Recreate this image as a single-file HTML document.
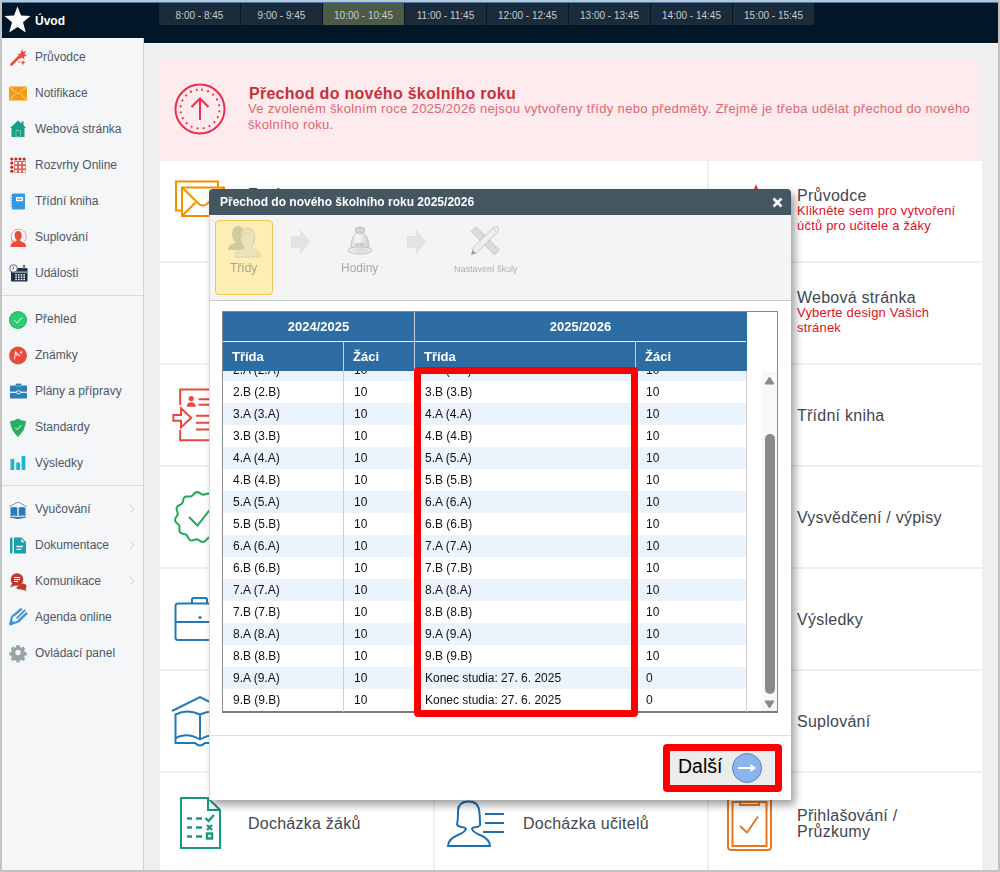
<!DOCTYPE html><html><head><meta charset="utf-8"><style>
*{box-sizing:border-box;margin:0;padding:0}
html,body{width:1000px;height:872px;overflow:hidden;background:#efefef;font-family:"Liberation Sans",sans-serif;position:relative}
.A{position:absolute}
.T{position:absolute;white-space:nowrap;line-height:1}
svg{position:absolute;overflow:visible}

</style></head><body>
<div class="A" style="left:0;top:0;width:1000px;height:44px;background:#011627"></div>
<div class="A" style="left:0;top:2px;width:1000px;height:1px;background:#3d7dbb"></div>
<div class="A" style="left:144px;top:43px;width:856px;height:1px;background:#f8f8f8"></div>
<div class="A" style="left:159px;top:3px;width:81px;height:22px;background:#1c2b3a"></div>
<div class="T" style="left:159px;top:11px;width:81px;text-align:center;font-size:10px;color:#c6cdd4">8:00 - 8:45</div>
<div class="A" style="left:241px;top:3px;width:81px;height:22px;background:#1c2b3a"></div>
<div class="T" style="left:241px;top:11px;width:81px;text-align:center;font-size:10px;color:#c6cdd4">9:00 - 9:45</div>
<div class="A" style="left:323px;top:3px;width:81px;height:22px;background:#4c5a46"></div>
<div class="T" style="left:323px;top:11px;width:81px;text-align:center;font-size:10px;color:#c6cdd4">10:00 - 10:45</div>
<div class="A" style="left:405px;top:3px;width:81px;height:22px;background:#1c2b3a"></div>
<div class="T" style="left:405px;top:11px;width:81px;text-align:center;font-size:10px;color:#c6cdd4">11:00 - 11:45</div>
<div class="A" style="left:487px;top:3px;width:81px;height:22px;background:#1c2b3a"></div>
<div class="T" style="left:487px;top:11px;width:81px;text-align:center;font-size:10px;color:#c6cdd4">12:00 - 12:45</div>
<div class="A" style="left:569px;top:3px;width:81px;height:22px;background:#1c2b3a"></div>
<div class="T" style="left:569px;top:11px;width:81px;text-align:center;font-size:10px;color:#c6cdd4">13:00 - 13:45</div>
<div class="A" style="left:651px;top:3px;width:81px;height:22px;background:#1c2b3a"></div>
<div class="T" style="left:651px;top:11px;width:81px;text-align:center;font-size:10px;color:#c6cdd4">14:00 - 14:45</div>
<div class="A" style="left:733px;top:3px;width:81px;height:22px;background:#1c2b3a"></div>
<div class="T" style="left:733px;top:11px;width:81px;text-align:center;font-size:10px;color:#c6cdd4">15:00 - 15:45</div>
<svg style="left:4px;top:6px" width="28" height="28" viewBox="0 0 28 28"><polygon points="13.5,0.5 17,9.5 26.5,10 19,16.2 21.8,26.5 13.5,21 5.2,26.5 8,16.2 0.5,10 10,9.5" fill="#fff"/></svg>
<div class="T" style="left:35px;top:15px;font-size:12px;font-weight:bold;color:#fff">Úvod</div>
<div class="A" style="left:2px;top:38px;width:142px;height:840px;background:#f5f6f8;border-right:1px solid #d4d4d4"></div>
<svg style="left:9px;top:48px" width="20" height="20" viewBox="0 0 20 20"><path d="M2.5,16.5 L11,8" stroke="#e74c3c" stroke-width="2.6" stroke-linecap="round"/><polygon points="13,1 14,4 17,3 15.5,6 18,8 15,8.5 15.5,11.5 13,9.5 10.5,11 11,8 8.5,6.5 11.5,5.5" fill="#e74c3c"/><polygon points="14,12 14.8,14 17,14.6 14.8,15.2 14,17.5 13.2,15.2 11,14.6 13.2,14" fill="#e74c3c"/><circle cx="10" cy="14" r="0.8" fill="#e74c3c"/></svg>
<div class="T" style="left:35px;top:51px;font-size:12px;color:#4d5666">Průvodce</div>
<svg style="left:9px;top:84px" width="20" height="20" viewBox="0 0 20 20"><rect x="0" y="2.5" width="18" height="14" fill="#f39c12"/><path d="M0.5,3 L9,10 L17.5,3 M0.5,16 L6.5,9.5 M17.5,16 L11.5,9.5" stroke="#fbe2b8" stroke-width="0.8" fill="none"/></svg>
<div class="T" style="left:35px;top:87px;font-size:12px;color:#4d5666">Notifikace</div>
<svg style="left:9px;top:120px" width="20" height="20" viewBox="0 0 20 20"><polygon points="1,8 9,0.5 12.5,3.5 12.5,1.5 14.5,1.5 14.5,5.3 17,8 15.5,8 15.5,17 2.5,17 2.5,8" fill="#16a085"/><rect x="7" y="10.5" width="4.5" height="6.5" fill="#16a085" stroke="#8fd3c4" stroke-width="0.7"/></svg>
<div class="T" style="left:35px;top:123px;font-size:12px;color:#4d5666">Webová stránka</div>
<svg style="left:9px;top:156px" width="20" height="20" viewBox="0 0 20 20"><g fill="#c0261a"><circle cx="2.8" cy="3" r="1.55"/><circle cx="6.9" cy="3" r="1.55"/><circle cx="11.0" cy="3" r="1.55"/><circle cx="15.1" cy="3" r="1.55"/><circle cx="2.8" cy="7.1" r="1.55"/><circle cx="2.8" cy="11.2" r="1.55"/><circle cx="2.8" cy="15.3" r="1.55"/></g><rect x="5.1" y="5.1" width="11.8" height="11.8" rx="1" fill="#d46a60"/><g fill="#fff"><rect x="5.9" y="6.0" width="2.2" height="2.2"/><rect x="10.0" y="6.0" width="2.2" height="2.2"/><rect x="14.1" y="6.0" width="2.2" height="2.2"/><rect x="5.9" y="10.1" width="2.2" height="2.2"/><rect x="10.0" y="10.1" width="2.2" height="2.2"/><rect x="14.1" y="10.1" width="2.2" height="2.2"/><rect x="5.9" y="14.2" width="2.2" height="2.2"/><rect x="10.0" y="14.2" width="2.2" height="2.2"/><rect x="14.1" y="14.2" width="2.2" height="2.2"/></g></svg>
<div class="T" style="left:35px;top:159px;font-size:12px;color:#4d5666">Rozvrhy Online</div>
<svg style="left:9px;top:192px" width="20" height="20" viewBox="0 0 20 20"><rect x="3" y="1.5" width="13" height="16" rx="1" fill="#3498db"/><rect x="7" y="5" width="7" height="4.2" fill="#fff"/><rect x="8.2" y="6.2" width="4.6" height="1.8" fill="#7fbbe8"/><path d="M1.5,4 h2.5 M1.5,6.5 h2.5 M1.5,9 h2.5 M1.5,11.5 h2.5 M1.5,14 h2.5" stroke="#3498db" stroke-width="0.9"/></svg>
<div class="T" style="left:35px;top:195px;font-size:12px;color:#4d5666">Třídní kniha</div>
<svg style="left:9px;top:228px" width="20" height="20" viewBox="0 0 20 20"><path d="M4,13.5 A7.5,7.5 0 1 1 15,14" stroke="#e74c3c" stroke-width="0.9" fill="none" stroke-dasharray="1.4,0.8"/><path d="M2.5,12.8 L4.3,14.5 L5.5,12.3" stroke="#e74c3c" stroke-width="0.9" fill="none"/><ellipse cx="9.2" cy="7.5" rx="3.5" ry="4.5" fill="#e74c3c"/><path d="M7.5,11 h3.6 v1.8 L16,15.5 Q17,16.5 17,19 H1.5 Q1.5,16.5 2.5,15.5 L7.5,12.8 Z" fill="#e74c3c"/></svg>
<div class="T" style="left:35px;top:231px;font-size:12px;color:#4d5666">Suplování</div>
<svg style="left:9px;top:264px" width="20" height="20" viewBox="0 0 20 20"><rect x="2" y="4" width="16.5" height="13.5" rx="0.8" fill="#1e3048"/><rect x="5" y="7.3" width="13" height="1.8" fill="#8a96a5"/><g fill="#fff"><rect x="6.3" y="10.2" width="1.6" height="1.4"/><rect x="9.0" y="10.2" width="1.6" height="1.4"/><rect x="11.7" y="10.2" width="1.6" height="1.4"/><rect x="14.4" y="10.2" width="1.6" height="1.4"/><rect x="6.3" y="12.5" width="1.6" height="1.4"/><rect x="9.0" y="12.5" width="1.6" height="1.4"/><rect x="11.7" y="12.5" width="1.6" height="1.4"/><rect x="14.4" y="12.5" width="1.6" height="1.4"/><rect x="6.3" y="14.8" width="1.6" height="1.4"/><rect x="9.0" y="14.8" width="1.6" height="1.4"/><rect x="11.7" y="14.8" width="1.6" height="1.4"/><rect x="14.4" y="14.8" width="1.6" height="1.4"/></g><circle cx="4.5" cy="4.5" r="3.8" fill="#f5f6f8" stroke="#5f6b7a" stroke-width="1"/><path d="M4.5,2.5 V4.8 H3" stroke="#5f6b7a" stroke-width="0.9" fill="none"/><rect x="14.2" y="1.5" width="1.5" height="3.5" fill="#f5f6f8" stroke="#1e3048" stroke-width="0.6"/></svg>
<div class="T" style="left:35px;top:267px;font-size:12px;color:#4d5666">Události</div>
<svg style="left:9px;top:310px" width="20" height="20" viewBox="0 0 20 20"><circle cx="9" cy="10" r="9" fill="#27ae60" /><circle cx="9" cy="10" r="8" fill="#2ecc71"/><path d="M5,10 L8,13 L13,7.5" stroke="#eafaf1" stroke-width="1" fill="none"/></svg>
<div class="T" style="left:35px;top:313px;font-size:12px;color:#4d5666">Přehled</div>
<svg style="left:9px;top:346px" width="20" height="20" viewBox="0 0 20 20"><circle cx="9" cy="9.5" r="9" fill="#e74c3c"/><path d="M5.5,13.5 L6.5,6 L11,10 M7,9.5 L9,8.5 M11,7 L13,5.5 M12,5 L12.8,7.5" stroke="#fbe3e0" stroke-width="1.1" fill="none"/></svg>
<div class="T" style="left:35px;top:349px;font-size:12px;color:#4d5666">Známky</div>
<svg style="left:9px;top:382px" width="20" height="20" viewBox="0 0 20 20"><rect x="1" y="3.5" width="17" height="13" rx="0.8" fill="#2a80b9"/><rect x="6.5" y="1.5" width="6" height="2.5" rx="1" fill="#2a80b9" stroke="#b9d6ea" stroke-width="0.6"/><path d="M1,10.3 H18" stroke="#eef5fb" stroke-width="1.3"/><ellipse cx="9.5" cy="10.3" rx="2.2" ry="1.6" fill="#2a80b9" stroke="#eef5fb" stroke-width="1"/></svg>
<div class="T" style="left:35px;top:385px;font-size:12px;color:#4d5666">Plány a přípravy</div>
<svg style="left:9px;top:418px" width="20" height="20" viewBox="0 0 20 20"><path d="M9,0.5 Q12.5,3 17,3 Q16.5,12 9,19 Q1.5,12 1,3 Q5.5,3 9,0.5 Z" fill="#27ae60"/><path d="M6,9.5 L8.3,11.8 L12.2,7" stroke="#eafaf1" stroke-width="1" fill="none"/></svg>
<div class="T" style="left:35px;top:421px;font-size:12px;color:#4d5666">Standardy</div>
<svg style="left:9px;top:454px" width="20" height="20" viewBox="0 0 20 20"><rect x="1.5" y="5" width="3.8" height="11" fill="#1fb5d0"/><rect x="7.2" y="8.5" width="3.8" height="7.5" fill="#1fb5d0"/><rect x="12.6" y="2" width="3.8" height="14" fill="#1fb5d0"/></svg>
<div class="T" style="left:35px;top:457px;font-size:12px;color:#4d5666">Výsledky</div>
<svg style="left:9px;top:500px" width="20" height="20" viewBox="0 0 20 20"><path d="M0.5,6.5 L9,2 L17.5,6.5" stroke="#2a7ab8" stroke-width="1" fill="none" stroke-dasharray="1.6,0.6"/><path d="M1.5,7.5 Q5,6.5 8.3,7.5 V16 Q5,15 1.5,16 Z M9.7,7.5 Q13,6.5 16.5,7.5 V16 Q13,15 9.7,16 Z" fill="#2a7ab8"/><path d="M1.5,17.2 H16.5 L9,18.6 Z" fill="#2a7ab8" stroke="#2a7ab8" stroke-width="1"/></svg>
<div class="T" style="left:35px;top:503px;font-size:12px;color:#4d5666">Vyučování</div>
<svg style="left:129px;top:504px" width="6" height="10" viewBox="0 0 6 10"><path d="M1,1 L5,5 L1,9" stroke="#cfd2d6" stroke-width="1" fill="none"/></svg>
<svg style="left:9px;top:536px" width="20" height="20" viewBox="0 0 20 20"><rect x="1" y="1.5" width="2.5" height="16" rx="1.2" fill="#1aa1ad"/><path d="M5,1.5 H12.5 L17,6 V17.5 H5 Z" fill="#1aa1ad"/><path d="M12.3,3 V6.3 H15.5 Z" fill="#fff"/><path d="M8,10.5 H13.5 M8,13.3 H12.2" stroke="#fff" stroke-width="1.3" stroke-linecap="round"/></svg>
<div class="T" style="left:35px;top:539px;font-size:12px;color:#4d5666">Dokumentace</div>
<svg style="left:129px;top:540px" width="6" height="10" viewBox="0 0 6 10"><path d="M1,1 L5,5 L1,9" stroke="#cfd2d6" stroke-width="1" fill="none"/></svg>
<svg style="left:9px;top:572px" width="20" height="20" viewBox="0 0 20 20"><circle cx="8" cy="7.5" r="6.3" fill="#c0392b"/><path d="M3,11.5 L1.2,15.5 L7,13 Z" fill="#c0392b"/><path d="M5,5.5 H11 M5,7.5 H11 M5,9.5 H9" stroke="#fff" stroke-width="1"/><path d="M12,11.5 Q17,11 17.5,14 Q17.5,16 16.5,17 L18,19 L12.5,17.5 Q9,17.5 7,16 Z" fill="#c0392b"/></svg>
<div class="T" style="left:35px;top:575px;font-size:12px;color:#4d5666">Komunikace</div>
<svg style="left:129px;top:576px" width="6" height="10" viewBox="0 0 6 10"><path d="M1,1 L5,5 L1,9" stroke="#cfd2d6" stroke-width="1" fill="none"/></svg>
<svg style="left:9px;top:608px" width="20" height="20" viewBox="0 0 20 20"><g stroke="#3d94d8" fill="none" stroke-linecap="butt"><path d="M3.8,8.2 L12.8,0.6" stroke-width="2.4"/><path d="M7.6,10.4 L16.2,1.9" stroke-width="1.8"/><path d="M9.5,13.2 L18,4.8" stroke-width="2.6"/><path d="M1,16.6 L3.2,7.8" stroke-width="2"/><path d="M1,16.6 L10.5,13" stroke-width="2"/></g><polygon points="0.2,17.5 2,11.5 6,15.3" fill="#3d94d8"/></svg>
<div class="T" style="left:35px;top:611px;font-size:12px;color:#4d5666">Agenda online</div>
<svg style="left:9px;top:644px" width="20" height="20" viewBox="0 0 20 20"><g transform="translate(9,8.5) scale(0.88)"><path d="M-1.6,-8.5 h3.2 l0.5,2.3 l1.8,0.8 l2,-1.3 l2.3,2.3 l-1.3,2 l0.8,1.8 l2.3,0.5 v3.2 l-2.3,0.5 l-0.8,1.8 l1.3,2 l-2.3,2.3 l-2,-1.3 l-1.8,0.8 l-0.5,2.3 h-3.2 l-0.5,-2.3 l-1.8,-0.8 l-2,1.3 l-2.3,-2.3 l1.3,-2 l-0.8,-1.8 l-2.3,-0.5 v-3.2 l2.3,-0.5 l0.8,-1.8 l-1.3,-2 l2.3,-2.3 l2,1.3 l1.8,-0.8 Z" fill="#95a5a6"/><circle r="3" fill="#f5f6f8"/></g></svg>
<div class="T" style="left:35px;top:647px;font-size:12px;color:#4d5666">Ovládací panel</div>
<div class="A" style="left:2px;top:295px;width:141px;height:1px;background:#dcdcdc"></div>
<div class="A" style="left:2px;top:485px;width:141px;height:1px;background:#dcdcdc"></div>
<div class="A" style="left:160px;top:59px;width:822px;height:100px;background:#fdebed"></div>
<svg style="left:174px;top:83px" width="52" height="52" viewBox="0 0 52 52"><circle cx="26" cy="26" r="24.5" stroke="#f02c4c" stroke-width="2" fill="none"/><circle cx="26" cy="26" r="19.5" stroke="#f02c4c" stroke-width="2.1" fill="none" stroke-dasharray="0.1,6.026" stroke-linecap="round" transform="rotate(-84 26 26)"/><path d="M26,37 V15.5 M17.5,24 L26,15.5 L34.5,24" stroke="#f02c4c" stroke-width="2" fill="none"/></svg>
<div class="T" style="left:249px;top:86px;font-size:16px;font-weight:bold;color:#c7303a;letter-spacing:0.27px">Přechod do nového školního roku</div>
<div class="T" style="left:248px;top:101px;font-size:13px;line-height:15.5px;color:#dc6670;letter-spacing:0.33px">Ve zvoleném školním roce 2025/2026 nejsou vytvořeny třídy nebo předměty. Zřejmě je třeba udělat přechod do nového<br>školního roku.</div>
<div class="A" style="left:160px;top:161px;width:547px;height:100px;background:#fff"></div>
<div class="A" style="left:709px;top:161px;width:273px;height:100px;background:#fff"></div>
<div class="A" style="left:160px;top:263px;width:273px;height:100px;background:#fff"></div>
<div class="A" style="left:435px;top:263px;width:272px;height:100px;background:#fff"></div>
<div class="A" style="left:709px;top:263px;width:273px;height:100px;background:#fff"></div>
<div class="A" style="left:160px;top:365px;width:273px;height:100px;background:#fff"></div>
<div class="A" style="left:435px;top:365px;width:272px;height:100px;background:#fff"></div>
<div class="A" style="left:709px;top:365px;width:273px;height:100px;background:#fff"></div>
<div class="A" style="left:160px;top:467px;width:273px;height:100px;background:#fff"></div>
<div class="A" style="left:435px;top:467px;width:272px;height:100px;background:#fff"></div>
<div class="A" style="left:709px;top:467px;width:273px;height:100px;background:#fff"></div>
<div class="A" style="left:160px;top:569px;width:273px;height:100px;background:#fff"></div>
<div class="A" style="left:435px;top:569px;width:272px;height:100px;background:#fff"></div>
<div class="A" style="left:709px;top:569px;width:273px;height:100px;background:#fff"></div>
<div class="A" style="left:160px;top:671px;width:273px;height:100px;background:#fff"></div>
<div class="A" style="left:435px;top:671px;width:272px;height:100px;background:#fff"></div>
<div class="A" style="left:709px;top:671px;width:273px;height:100px;background:#fff"></div>
<div class="A" style="left:160px;top:773px;width:273px;height:100px;background:#fff"></div>
<div class="A" style="left:435px;top:773px;width:272px;height:100px;background:#fff"></div>
<div class="A" style="left:709px;top:773px;width:273px;height:100px;background:#fff"></div>
<div class="T" style="left:797px;top:188px;font-size:16px;color:#3f4751;letter-spacing:0.25px">Průvodce</div>
<div class="T" style="left:797px;top:203px;font-size:13px;color:#e0101e;line-height:15px;letter-spacing:0.2px">Klikněte sem pro vytvoření<br>účtů pro učitele a žáky</div>
<div class="T" style="left:797px;top:290px;font-size:16px;color:#3f4751;letter-spacing:0.25px">Webová stránka</div>
<div class="T" style="left:797px;top:305px;font-size:13px;color:#e0101e;line-height:15px;letter-spacing:0.2px">Vyberte design Vašich<br>stránek</div>
<div class="T" style="left:797px;top:408px;font-size:16px;color:#3f4751;letter-spacing:0.25px">Třídní kniha</div>
<div class="T" style="left:797px;top:510px;font-size:16px;color:#3f4751;letter-spacing:0.25px">Vysvědčení / výpisy</div>
<div class="T" style="left:797px;top:612px;font-size:16px;color:#3f4751;letter-spacing:0.25px">Výsledky</div>
<div class="T" style="left:797px;top:714px;font-size:16px;color:#3f4751;letter-spacing:0.25px">Suplování</div>
<div class="T" style="left:797px;top:808px;font-size:16px;color:#3f4751;letter-spacing:0.25px;line-height:16px">Přihlašování /<br>Průzkumy</div>
<div class="T" style="left:248px;top:816px;font-size:16px;color:#3f4751;letter-spacing:0.25px">Docházka žáků</div>
<div class="T" style="left:523px;top:816px;font-size:16px;color:#3f4751;letter-spacing:0.25px">Docházka učitelů</div>
<div class="T" style="left:248px;top:187px;font-size:16px;color:#3f4751;letter-spacing:0.25px">Zprávy</div>
<svg style="left:752px;top:184px" width="10" height="10" viewBox="0 0 10 10"><polygon points="4,0 6,5 2,5" fill="#e03b30"/></svg>
<svg style="left:170px;top:175px" width="60" height="50" viewBox="0 0 60 50" fill="none" stroke="#f39200" stroke-width="2"><path d="M11,35.5 H6 V6.5 H48 V12"/><rect x="12" y="12.5" width="42" height="28.5"/><path d="M12,12.5 L29,29 Q33,32 37,29 L54,12.5 M12,41 L25.5,27.5"/></svg>
<svg style="left:168px;top:385px" width="50" height="60" viewBox="0 0 50 60" fill="none" stroke="#e8483e" stroke-width="2"><path d="M12.2,20 V4.5 H45 M12.2,45 V55.3 H45"/><path d="M5.4,29.9 H13 V23.2 L23.2,32.8 L13,42.5 V35.8 H5.4 Z"/><path d="M28,30.8 H45 M28,37.7 H45 M28,44.6 H45 M30.5,14.3 H45 M30.5,19.8 H45"/><circle cx="23.2" cy="13.6" r="2.6" fill="#e8483e" stroke="none"/><path d="M18.6,21.8 Q19,17.2 23.2,17.2 Q27.4,17.2 27.8,21.8 Z" fill="#e8483e" stroke="none"/></svg>
<svg style="left:175px;top:492px" width="50" height="50" viewBox="0 0 50 50" fill="none" stroke="#1eaa58" stroke-width="2"><polyline points="48.80,25.00 47.80,26.49 47.26,27.93 47.41,29.46 47.99,31.16 48.44,32.96 48.24,34.62 47.20,35.95 45.61,36.90 44.00,37.69 42.81,38.67 42.18,40.06 41.83,41.83 41.32,43.61 40.31,44.95 38.75,45.58 36.90,45.61 35.10,45.49 33.59,45.74 32.34,46.63 31.16,47.99 29.83,49.28 28.28,49.93 26.62,49.70 25.00,48.80 23.51,47.80 22.07,47.26 20.54,47.41 18.84,47.99 17.04,48.44 15.38,48.24 14.05,47.20 13.10,45.61 12.31,44.00 11.33,42.81 9.94,42.18 8.17,41.83 6.39,41.32 5.05,40.31 4.42,38.75 4.39,36.90 4.51,35.10 4.26,33.59 3.37,32.34 2.01,31.16 0.72,29.83 0.07,28.28 0.30,26.62 1.20,25.00 2.20,23.51 2.74,22.07 2.59,20.54 2.01,18.84 1.56,17.04 1.76,15.38 2.80,14.05 4.39,13.10 6.00,12.31 7.19,11.33 7.82,9.94 8.17,8.17 8.68,6.39 9.69,5.05 11.25,4.42 13.10,4.39 14.90,4.51 16.41,4.26 17.66,3.37 18.84,2.01 20.17,0.72 21.72,0.07 23.38,0.30 25.00,1.20 26.49,2.20 27.93,2.74 29.46,2.59 31.16,2.01 32.96,1.56 34.62,1.76 35.95,2.80 36.90,4.39 37.69,6.00 38.67,7.19 40.06,7.82 41.83,8.17 43.61,8.68 44.95,9.69 45.58,11.25 45.61,13.10 45.49,14.90 45.74,16.41 46.63,17.66 47.99,18.84 49.28,20.17 49.93,21.72 49.70,23.38 48.80,25.00"/><path d="M14,25 L22.5,33.5 L37,15"/></svg>
<svg style="left:174px;top:596px" width="52" height="46" viewBox="0 0 52 46" fill="none" stroke="#2379b7" stroke-width="2"><path d="M18,7.5 V3.5 Q18,2 19.5,2 H31.5 Q33,2 33,3.5 V7.5"/><rect x="1.5" y="7.5" width="49" height="36.5" rx="2.5"/><path d="M1.5,26 H50.5"/><circle cx="26" cy="21.5" r="1.6" fill="#2379b7" stroke="none"/></svg>
<svg style="left:170px;top:695px" width="60" height="56" viewBox="0 0 60 56" fill="none" stroke="#2379b7" stroke-width="2"><path d="M2,16 L30,2 L58,16"/><path d="M5.5,19.5 Q17,13.5 30,19.5 Q43,13.5 54.5,19.5 V48 H35 Q30,53 25,48 H5.5 Z M30,19.5 V45"/><path d="M5.5,43 Q17,37 30,44.5 Q43,37 54.5,43"/></svg>
<svg style="left:178px;top:796px" width="44" height="54" viewBox="0 0 44 54" fill="none" stroke="#16997e" stroke-width="2"><path d="M3,2 H30 L42,14 V52 H3 Z M30,2 V14 H42"/><path d="M9,22.5 H14 M18,22.5 H24 M9,31.5 H14 M18,31.5 H24 M9,40.5 H14 M18,40.5 H24" stroke-width="2.4"/><path d="M27.5,22 L30.5,25 L36,19 M29,29 L34,34 M34,29 L29,34" stroke-width="2.4"/><rect x="29" y="37.5" width="5" height="5" stroke-width="2.4"/></svg>
<svg style="left:446px;top:799px" width="60" height="50" viewBox="0 0 60 50" fill="none" stroke="#1f6fb0" stroke-width="2"><path d="M2,47 Q2,40 12,36 Q19,33 20,30 Q19,28 15,28 Q11,27 11,25 Q12,22 12,12 Q12,3 22,2.5 Q31,2 33,10 Q34,17 34,24 Q35,27 31,28 Q26,28 26,30 Q27,33 34,36 Q44,40 44,47 Z"/><path d="M39,15 H58 M39,24 H58 M37,33 H58"/></svg>
<svg style="left:725px;top:795px" width="50" height="58" viewBox="0 0 50 58" fill="none" stroke="#e8771e" stroke-width="2"><path d="M3,2 V51.5 Q3,55 6.5,55 H42.5 Q46,55 46,51.5 V2"/><rect x="7.5" y="7" width="34" height="44"/><path d="M15,6 V10 H34 V6"/><path d="M15,31 L22,37.5 L33,21.5"/></svg>
<div class="A" style="left:209px;top:189px;width:582px;height:611px;background:#fff;border-radius:4px 4px 0 0;box-shadow:4px 5px 9px rgba(0,0,0,0.38)"></div>
<div class="A" style="left:209px;top:189px;width:582px;height:26px;background:#44565f;border-radius:4px 4px 0 0"></div>
<div class="T" style="left:220px;top:196px;font-size:12px;font-weight:bold;color:#fff;will-change:transform">Přechod do nového školního roku 2025/2026</div>
<svg style="left:772px;top:197px" width="11" height="11" viewBox="0 0 11 11"><path d="M1.5,1.5 L9.5,9.5 M9.5,1.5 L1.5,9.5" stroke="#fff" stroke-width="2.6"/></svg>
<div class="A" style="left:209px;top:215px;width:582px;height:85px;background:#f4f4f4;border-left:1px solid #d6d6d6"></div>
<div class="A" style="left:209px;top:300px;width:582px;height:1px;background:#cacaca"></div>
<div class="A" style="left:209px;top:301px;width:1px;height:499px;background:#dadada"></div>
<div class="A" style="left:215px;top:220px;width:58px;height:75px;background:#fdeeb4;border:1px solid #f0c550;border-radius:4px"></div>
<svg style="left:226px;top:223px" width="36" height="36" viewBox="0 0 36 36"><path d="M2,27 Q2.5,21.5 8,20.5 L9.5,19 Q6,16.5 6,11 Q6.5,3 12,3 Q17.5,3 18,10 Q18.5,17 15.5,19.5 L18,21.5 L18,27 Z" fill="#d3c9a0"/><path d="M9,34 Q9.5,27.5 16.5,26 L19,24.5 Q15,21 14.5,15 Q14.5,5 21.5,5 Q28.5,5 29,14 Q29,21 25,24.5 L27.5,26 Q34,27.5 34.5,34 Z" fill="#ece3b9" stroke="#d6cc9f" stroke-width="0.8"/><path d="M15.5,14 Q17,9 21.5,10 Q26,11 27.5,14" stroke="#d6cc9f" stroke-width="0.8" fill="none"/></svg>
<div class="T" style="left:230px;top:262px;font-size:12px;color:#aaa58a;will-change:transform">Třídy</div>
<svg style="left:291px;top:228px" width="20" height="28" viewBox="0 0 20 28"><polygon points="0,8 9,8 9,1 19,14 9,27 9,20 0,20" fill="#e3e3e3"/></svg>
<svg style="left:407px;top:228px" width="20" height="28" viewBox="0 0 20 28"><polygon points="0,8 9,8 9,1 19,14 9,27 9,20 0,20" fill="#e3e3e3"/></svg>
<svg style="left:346px;top:226px" width="28" height="30" viewBox="0 0 28 30"><defs><linearGradient id="bg1" x1="0" y1="0" x2="1" y2="0"><stop offset="0" stop-color="#d8d8d8"/><stop offset="0.35" stop-color="#f7f7f7"/><stop offset="1" stop-color="#cfcfcf"/></linearGradient></defs><path d="M5,22 Q4.5,8 14,5.5 Q23.5,8 23,22 Z" fill="url(#bg1)" stroke="#c2c2c2" stroke-width="0.8"/><ellipse cx="14" cy="24.5" rx="12" ry="3.6" fill="#ececec" stroke="#bcbcbc" stroke-width="0.9"/><ellipse cx="15" cy="24.5" rx="8" ry="2.4" fill="#dedede"/><ellipse cx="14" cy="4.3" rx="4.8" ry="3.3" fill="#d2d2d2" stroke="#bdbdbd" stroke-width="0.7"/><text x="14" y="19.8" font-size="7" font-style="italic" text-anchor="middle" fill="#8f8f8f" font-family="Liberation Serif">asc</text></svg>
<div class="T" style="left:341px;top:262px;font-size:12px;color:#a8a8a8;will-change:transform">Hodiny</div>
<svg style="left:469px;top:225px" width="32" height="32" viewBox="0 0 32 32"><path d="M2,6.5 L7,1.5 L30.5,25 L25.5,30 Z" fill="#dcdcdc" stroke="#c4c4c4" stroke-width="0.8"/><path d="M9,4 L7.5,5.5 M12,7 L10.5,8.5 M15,10 L13.5,11.5 M21,16 L19.5,17.5 M24,19 L22.5,20.5 M27,22 L25.5,23.5" stroke="#b8b8b8" stroke-width="0.6"/><path d="M2.5,29.5 L5,21.5 L25,2 Q27,0.5 29,2.5 Q30.5,4.5 29,6.5 L9,26.5 Z" fill="#efefef" stroke="#bcbcbc" stroke-width="0.8"/><path d="M24,3.5 L27.5,7" stroke="#bcbcbc" stroke-width="0.7"/><path d="M2.5,29.5 L3.5,25 L7,28.5 Z" fill="#9a9a9a"/></svg>
<div class="T" style="left:454px;top:265px;font-size:9px;color:#aeaeae;will-change:transform">Nastavení školy</div>
<div class="A" style="left:222px;top:311px;width:556px;height:402px;border:1px solid #8a8a8a;border-bottom:2px solid #7a7a7a;background:#fff"></div>
<div class="A" style="left:223px;top:312px;width:523px;height:59px;background:#2e6da4"></div>
<div class="A" style="left:223px;top:341px;width:523px;height:1px;background:#e8eef5"></div>
<div class="A" style="left:414px;top:312px;width:1px;height:29px;background:#c5d3e0"></div>
<div class="A" style="left:343px;top:342px;width:1px;height:29px;background:#c5d3e0"></div>
<div class="A" style="left:414px;top:342px;width:1px;height:29px;background:#c5d3e0"></div>
<div class="A" style="left:635px;top:342px;width:1px;height:29px;background:#c5d3e0"></div>
<div class="T" style="left:223px;top:320px;width:191px;text-align:center;font-size:13px;font-weight:bold;color:#fff;will-change:transform">2024/2025</div>
<div class="T" style="left:415px;top:320px;width:331px;text-align:center;font-size:13px;font-weight:bold;color:#fff;will-change:transform">2025/2026</div>
<div class="T" style="left:232px;top:350px;font-size:13px;font-weight:bold;color:#fff;will-change:transform">Třída</div>
<div class="T" style="left:353px;top:350px;font-size:13px;font-weight:bold;color:#fff;will-change:transform">Žáci</div>
<div class="T" style="left:424px;top:350px;font-size:13px;font-weight:bold;color:#fff;will-change:transform">Třída</div>
<div class="T" style="left:645px;top:350px;font-size:13px;font-weight:bold;color:#fff;will-change:transform">Žáci</div>
<div class="A" style="left:223px;top:371px;width:523px;height:340px;overflow:hidden;will-change:transform">
<div class="A" style="left:0;top:-12px;width:523px;height:22px;background:#ebf3fd"></div>
<div class="T" style="left:10px;top:-7px;font-size:12px;color:#111">2.A (2.A)</div>
<div class="T" style="left:131px;top:-7px;font-size:12px;color:#111">10</div>
<div class="T" style="left:202px;top:-7px;font-size:12px;color:#111">3.A (3.A)</div>
<div class="T" style="left:423px;top:-7px;font-size:12px;color:#111">10</div>
<div class="A" style="left:0;top:10px;width:523px;height:22px;background:#fff"></div>
<div class="T" style="left:10px;top:15px;font-size:12px;color:#111">2.B (2.B)</div>
<div class="T" style="left:131px;top:15px;font-size:12px;color:#111">10</div>
<div class="T" style="left:202px;top:15px;font-size:12px;color:#111">3.B (3.B)</div>
<div class="T" style="left:423px;top:15px;font-size:12px;color:#111">10</div>
<div class="A" style="left:0;top:32px;width:523px;height:22px;background:#ebf3fd"></div>
<div class="T" style="left:10px;top:37px;font-size:12px;color:#111">3.A (3.A)</div>
<div class="T" style="left:131px;top:37px;font-size:12px;color:#111">10</div>
<div class="T" style="left:202px;top:37px;font-size:12px;color:#111">4.A (4.A)</div>
<div class="T" style="left:423px;top:37px;font-size:12px;color:#111">10</div>
<div class="A" style="left:0;top:54px;width:523px;height:22px;background:#fff"></div>
<div class="T" style="left:10px;top:59px;font-size:12px;color:#111">3.B (3.B)</div>
<div class="T" style="left:131px;top:59px;font-size:12px;color:#111">10</div>
<div class="T" style="left:202px;top:59px;font-size:12px;color:#111">4.B (4.B)</div>
<div class="T" style="left:423px;top:59px;font-size:12px;color:#111">10</div>
<div class="A" style="left:0;top:76px;width:523px;height:22px;background:#ebf3fd"></div>
<div class="T" style="left:10px;top:81px;font-size:12px;color:#111">4.A (4.A)</div>
<div class="T" style="left:131px;top:81px;font-size:12px;color:#111">10</div>
<div class="T" style="left:202px;top:81px;font-size:12px;color:#111">5.A (5.A)</div>
<div class="T" style="left:423px;top:81px;font-size:12px;color:#111">10</div>
<div class="A" style="left:0;top:98px;width:523px;height:22px;background:#fff"></div>
<div class="T" style="left:10px;top:103px;font-size:12px;color:#111">4.B (4.B)</div>
<div class="T" style="left:131px;top:103px;font-size:12px;color:#111">10</div>
<div class="T" style="left:202px;top:103px;font-size:12px;color:#111">5.B (5.B)</div>
<div class="T" style="left:423px;top:103px;font-size:12px;color:#111">10</div>
<div class="A" style="left:0;top:120px;width:523px;height:22px;background:#ebf3fd"></div>
<div class="T" style="left:10px;top:125px;font-size:12px;color:#111">5.A (5.A)</div>
<div class="T" style="left:131px;top:125px;font-size:12px;color:#111">10</div>
<div class="T" style="left:202px;top:125px;font-size:12px;color:#111">6.A (6.A)</div>
<div class="T" style="left:423px;top:125px;font-size:12px;color:#111">10</div>
<div class="A" style="left:0;top:142px;width:523px;height:22px;background:#fff"></div>
<div class="T" style="left:10px;top:147px;font-size:12px;color:#111">5.B (5.B)</div>
<div class="T" style="left:131px;top:147px;font-size:12px;color:#111">10</div>
<div class="T" style="left:202px;top:147px;font-size:12px;color:#111">6.B (6.B)</div>
<div class="T" style="left:423px;top:147px;font-size:12px;color:#111">10</div>
<div class="A" style="left:0;top:164px;width:523px;height:22px;background:#ebf3fd"></div>
<div class="T" style="left:10px;top:169px;font-size:12px;color:#111">6.A (6.A)</div>
<div class="T" style="left:131px;top:169px;font-size:12px;color:#111">10</div>
<div class="T" style="left:202px;top:169px;font-size:12px;color:#111">7.A (7.A)</div>
<div class="T" style="left:423px;top:169px;font-size:12px;color:#111">10</div>
<div class="A" style="left:0;top:186px;width:523px;height:22px;background:#fff"></div>
<div class="T" style="left:10px;top:191px;font-size:12px;color:#111">6.B (6.B)</div>
<div class="T" style="left:131px;top:191px;font-size:12px;color:#111">10</div>
<div class="T" style="left:202px;top:191px;font-size:12px;color:#111">7.B (7.B)</div>
<div class="T" style="left:423px;top:191px;font-size:12px;color:#111">10</div>
<div class="A" style="left:0;top:208px;width:523px;height:22px;background:#ebf3fd"></div>
<div class="T" style="left:10px;top:213px;font-size:12px;color:#111">7.A (7.A)</div>
<div class="T" style="left:131px;top:213px;font-size:12px;color:#111">10</div>
<div class="T" style="left:202px;top:213px;font-size:12px;color:#111">8.A (8.A)</div>
<div class="T" style="left:423px;top:213px;font-size:12px;color:#111">10</div>
<div class="A" style="left:0;top:230px;width:523px;height:22px;background:#fff"></div>
<div class="T" style="left:10px;top:235px;font-size:12px;color:#111">7.B (7.B)</div>
<div class="T" style="left:131px;top:235px;font-size:12px;color:#111">10</div>
<div class="T" style="left:202px;top:235px;font-size:12px;color:#111">8.B (8.B)</div>
<div class="T" style="left:423px;top:235px;font-size:12px;color:#111">10</div>
<div class="A" style="left:0;top:252px;width:523px;height:22px;background:#ebf3fd"></div>
<div class="T" style="left:10px;top:257px;font-size:12px;color:#111">8.A (8.A)</div>
<div class="T" style="left:131px;top:257px;font-size:12px;color:#111">10</div>
<div class="T" style="left:202px;top:257px;font-size:12px;color:#111">9.A (9.A)</div>
<div class="T" style="left:423px;top:257px;font-size:12px;color:#111">10</div>
<div class="A" style="left:0;top:274px;width:523px;height:22px;background:#fff"></div>
<div class="T" style="left:10px;top:279px;font-size:12px;color:#111">8.B (8.B)</div>
<div class="T" style="left:131px;top:279px;font-size:12px;color:#111">10</div>
<div class="T" style="left:202px;top:279px;font-size:12px;color:#111">9.B (9.B)</div>
<div class="T" style="left:423px;top:279px;font-size:12px;color:#111">10</div>
<div class="A" style="left:0;top:296px;width:523px;height:22px;background:#ebf3fd"></div>
<div class="T" style="left:10px;top:301px;font-size:12px;color:#111">9.A (9.A)</div>
<div class="T" style="left:131px;top:301px;font-size:12px;color:#111">10</div>
<div class="T" style="left:202px;top:301px;font-size:12px;color:#111">Konec studia: 27. 6. 2025</div>
<div class="T" style="left:423px;top:301px;font-size:12px;color:#111">0</div>
<div class="A" style="left:0;top:318px;width:523px;height:22px;background:#fff"></div>
<div class="T" style="left:10px;top:323px;font-size:12px;color:#111">9.B (9.B)</div>
<div class="T" style="left:131px;top:323px;font-size:12px;color:#111">10</div>
<div class="T" style="left:202px;top:323px;font-size:12px;color:#111">Konec studia: 27. 6. 2025</div>
<div class="T" style="left:423px;top:323px;font-size:12px;color:#111">0</div>
</div>
<div class="A" style="left:343px;top:371px;width:1px;height:341px;background:#cfcfcf"></div>
<div class="A" style="left:414px;top:371px;width:1px;height:341px;background:#cfcfcf"></div>
<div class="A" style="left:635px;top:371px;width:1px;height:341px;background:#cfcfcf"></div>
<div class="A" style="left:746px;top:312px;width:1px;height:400px;background:#d0d0d0"></div>
<div class="A" style="left:746px;top:312px;width:1px;height:59px;background:#2e6da4"></div>
<div class="A" style="left:762px;top:372px;width:15px;height:339px;background:#f8f8f8"></div>
<svg style="left:764px;top:376px" width="11" height="9" viewBox="0 0 11 9"><polygon points="5.5,1 10,8 1,8" fill="#8a8a8a" stroke="#8a8a8a" stroke-width="1" stroke-linejoin="round"/></svg>
<svg style="left:764px;top:700px" width="11" height="9" viewBox="0 0 11 9"><polygon points="1,1 10,1 5.5,8" fill="#8a8a8a" stroke="#8a8a8a" stroke-width="1" stroke-linejoin="round"/></svg>
<div class="A" style="left:764.5px;top:434px;width:10px;height:260px;background:#8a8a8a;border-radius:5px"></div>
<div class="A" style="left:414px;top:367px;width:224px;height:350px;border:7px solid #ff0000;border-radius:4px"></div>
<div class="A" style="left:210px;top:735px;width:581px;height:1px;background:#dedede"></div>
<div class="A" style="left:663px;top:744px;width:119px;height:48px;background:#ff0000;border-radius:4px"></div>
<div class="A" style="left:670px;top:751px;width:105px;height:34px;background:#ececec"></div>
<div class="T" style="left:678px;top:757px;font-size:19.5px;color:#000">Další</div>
<svg style="left:731px;top:752px" width="32" height="32" viewBox="0 0 32 32"><circle cx="16" cy="16" r="14.5" fill="#8ab4ec" stroke="#5d84c0" stroke-width="1"/><path d="M7,16 H23" stroke="#fff" stroke-width="2"/><polygon points="25,16 19.5,12 19.5,20" fill="#fff"/></svg>
<div class="A" style="left:0;top:0;width:1000px;height:2px;background:#c4c4c4"></div>
<div class="A" style="left:0;top:870px;width:1000px;height:2px;background:#c2c2c2"></div>
<div class="A" style="left:0;top:0;width:2px;height:872px;background:#c4c4c4"></div>
<div class="A" style="left:998px;top:0;width:2px;height:872px;background:#c2c2c2"></div>
</body></html>
